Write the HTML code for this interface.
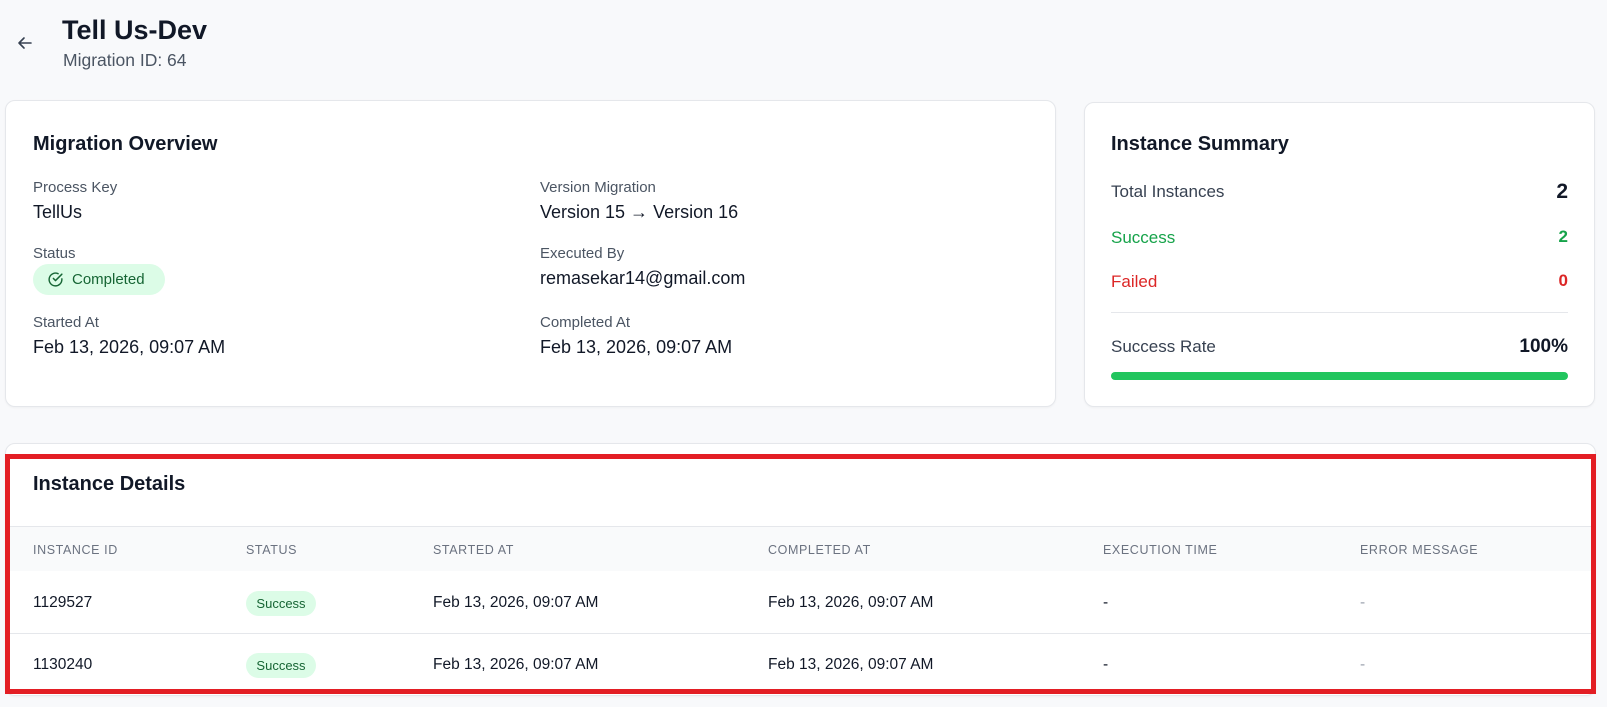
<!DOCTYPE html>
<html><head><meta charset="utf-8"><style>
*{margin:0;padding:0;box-sizing:border-box}
body{width:1607px;height:707px;background:#f8f9fb;font-family:"Liberation Sans",Arial,sans-serif;color:#111827;position:relative;overflow:hidden}
.a{position:absolute;white-space:nowrap;line-height:1}
.card{position:absolute;background:#fff;border:1px solid #e5e7eb;border-radius:10px;box-shadow:0 1px 2px rgba(0,0,0,.04)}
.lbl{font-size:15px;color:#4b5563}
.val{font-size:18px;color:#111827}
.h2{font-size:20px;font-weight:700;color:#111827}
.th{font-size:12.5px;color:#6b7280;letter-spacing:.6px}
.td{font-size:15.5px;color:#111827}
.pill{position:absolute;background:#dcfce7;color:#166534;border-radius:13px;font-size:13px;text-align:center;line-height:25px;height:25px;width:70px}
</style></head><body>
<svg class="a" style="left:16px;top:34px" width="18" height="18" viewBox="0 0 18 18"><path d="M15 9H3M8 4L3 9l5 5" fill="none" stroke="#374151" stroke-width="1.6" stroke-linecap="round" stroke-linejoin="round"/></svg>
<div class="a" style="left:62px;top:17px;font-size:27px;font-weight:700">Tell Us-Dev</div>
<div class="a" style="left:63px;top:52px;font-size:17.5px;color:#4b5563">Migration ID: 64</div>

<div class="card" style="left:5px;top:100px;width:1051px;height:307px"></div>
<div class="a h2" style="left:33px;top:134px">Migration Overview</div>
<div class="a lbl" style="left:33px;top:180px">Process Key</div>
<div class="a val" style="left:33px;top:203px">TellUs</div>
<div class="a lbl" style="left:33px;top:246px">Status</div>
<div class="a" style="left:33px;top:264px;width:132px;height:31px;background:#dcfce7;border-radius:16px"></div>
<svg class="a" style="left:47px;top:271px" width="17" height="17" viewBox="0 0 24 24"><path d="M21 11.1V12a9 9 0 1 1-5.3-8.2" fill="none" stroke="#166534" stroke-width="2" stroke-linecap="round"/><path d="M21 4.5L12 13.5l-3-3" fill="none" stroke="#166534" stroke-width="2" stroke-linecap="round" stroke-linejoin="round"/></svg>
<div class="a" style="left:72px;top:272px;font-size:15px;color:#166534">Completed</div>
<div class="a lbl" style="left:33px;top:315px">Started At</div>
<div class="a val" style="left:33px;top:338px">Feb 13, 2026, 09:07 AM</div>
<div class="a lbl" style="left:540px;top:180px">Version Migration</div>
<div class="a val" style="left:540px;top:203px">Version 15 → Version 16</div>
<div class="a lbl" style="left:540px;top:246px">Executed By</div>
<div class="a val" style="left:540px;top:269px">remasekar14@gmail.com</div>
<div class="a lbl" style="left:540px;top:315px">Completed At</div>
<div class="a val" style="left:540px;top:338px">Feb 13, 2026, 09:07 AM</div>

<div class="card" style="left:1084px;top:102px;width:511px;height:305px"></div>
<div class="a h2" style="left:1111px;top:134px">Instance Summary</div>
<div class="a" style="left:1111px;top:183px;font-size:17px;color:#374151">Total Instances</div>
<div class="a" style="right:39px;top:181px;font-size:21px;font-weight:700">2</div>
<div class="a" style="left:1111px;top:229px;font-size:17px;color:#16a34a">Success</div>
<div class="a" style="right:39px;top:228px;font-size:17px;color:#16a34a;font-weight:700">2</div>
<div class="a" style="left:1111px;top:273px;font-size:17px;color:#dc2626">Failed</div>
<div class="a" style="right:39px;top:272px;font-size:17px;color:#dc2626;font-weight:700">0</div>
<div class="a" style="left:1111px;top:312px;width:457px;height:1px;background:#e5e7eb"></div>
<div class="a" style="left:1111px;top:338px;font-size:17px;color:#374151">Success Rate</div>
<div class="a" style="right:39px;top:337px;font-size:19px;font-weight:700">100%</div>
<div class="a" style="left:1111px;top:372px;width:457px;height:8px;background:#22c55e;border-radius:4px"></div>

<div class="card" style="left:5px;top:443px;width:1591px;height:253px"></div>
<div class="a" style="left:10px;top:526px;width:1581px;height:45px;background:#f9fafb;border-top:1px solid #e5e7eb"></div>
<div class="a" style="left:10px;top:633px;width:1581px;height:1px;background:#e5e7eb"></div>
<div class="a h2" style="left:33px;top:474px">Instance Details</div>
<div class="a th" style="left:33px;top:544px">INSTANCE ID</div>
<div class="a th" style="left:246px;top:544px">STATUS</div>
<div class="a th" style="left:433px;top:544px">STARTED AT</div>
<div class="a th" style="left:768px;top:544px">COMPLETED AT</div>
<div class="a th" style="left:1103px;top:544px">EXECUTION TIME</div>
<div class="a th" style="left:1360px;top:544px">ERROR MESSAGE</div>

<div class="a td" style="left:33px;top:595px">1129527</div>
<div class="pill" style="left:246px;top:591px">Success</div>
<div class="a td" style="left:433px;top:595px">Feb 13, 2026, 09:07 AM</div>
<div class="a td" style="left:768px;top:595px">Feb 13, 2026, 09:07 AM</div>
<div class="a td" style="left:1103px;top:595px">-</div>
<div class="a td" style="left:1360px;top:595px;color:#9ca3af">-</div>

<div class="a td" style="left:33px;top:657px">1130240</div>
<div class="pill" style="left:246px;top:653px">Success</div>
<div class="a td" style="left:433px;top:657px">Feb 13, 2026, 09:07 AM</div>
<div class="a td" style="left:768px;top:657px">Feb 13, 2026, 09:07 AM</div>
<div class="a td" style="left:1103px;top:657px">-</div>
<div class="a td" style="left:1360px;top:657px;color:#9ca3af">-</div>

<div class="a" style="left:5px;top:454px;width:1591px;height:240px;border:5px solid #e31e24"></div>
</body></html>
